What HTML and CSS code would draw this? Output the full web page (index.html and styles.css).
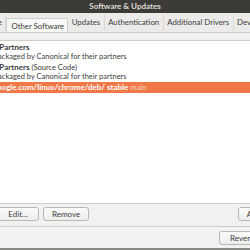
FILE: index.html
```html
<!DOCTYPE html>
<html lang="en">
<head>
  <meta charset="UTF-8" />
  <title>Software &amp; Updates</title>
  <link rel="stylesheet" href="styles.css">
</head>
<body>
  <div class="window">
    <header class="titlebar">Software &amp; Updates</header>
    <nav class="tabs">
      <span class="tab">Ubuntu Software</span>
      <span class="tab active">Other Software</span>
      <span class="tab">Updates</span>
      <span class="tab">Authentication</span>
      <span class="tab">Additional Drivers</span>
      <span class="tab">Developer Options</span>
    </nav>
    <section class="page">
      <ul class="sources">
        <li class="source">
          <b>Canonical Partners</b>
          <span>Software packaged by Canonical for their partners</span>
        </li>
        <li class="source">
          <span><b>Canonical Partners</b> (Source Code)</span>
          <span>Software packaged by Canonical for their partners</span>
        </li>
        <li class="source selected">
          <span><b>http://dl.google.com/linux/chrome/deb/ stable</b> <i>main</i></span>
        </li>
      </ul>
      <div class="actions">
        <div class="group">
          <button>Add...</button>
          <button>Edit...</button>
          <button>Remove</button>
        </div>
        <button class="volume">Add Volume...</button>
      </div>
    </section>
    <footer class="footer">
      <button>Revert</button>
      <button>Close</button>
    </footer>
  </div>
</body>
</html>
```

FILE: styles.css
```css
:root {
  --title-bg: #3c3b37;
  --title-text: #dfdbd2;
  --window-bg: #f2f1f0;
  --tab-bg: #ecebea;
  --border: #cfcdca;
  --text: #3c3c3c;
  --accent: #f07746;
}
* { box-sizing: border-box; margin: 0; padding: 0; }
body {
  width: 250px; height: 250px; overflow: hidden;
  font-family: 'Lato', sans-serif;
  font-size: 8px;
  color: var(--text);
  background: var(--window-bg);
}
.window { width: 250px; height: 250px; overflow: hidden; border-bottom: 2px solid #8a8885; }
.titlebar {
  height: 13px; line-height: 13px;
  background: var(--title-bg); color: var(--title-text);
  font-weight: 700; text-align: center;
}
.tabs {
  display: flex; align-items: flex-end;
  height: 20px; background: var(--tab-bg);
  border-bottom: 1px solid var(--border);
  margin-left: -60px; white-space: nowrap;
  font-size: 7.8px;
}
.tab {
  height: 16px; line-height: 14px;
  padding: 0 3.5px; margin-bottom: 1px;
  border-right: 1px solid #dcdad7;
}
.tab.active {
  background: #f7f7f6; height: 14px;
  border: 1px solid var(--border); border-bottom: none;
  margin-bottom: 0; padding: 0 3px 0 4px;
}
.page {
  padding: 7px 0 0;
  border-bottom: 1px solid var(--border);
}
.sources {
  list-style: none; height: 164px;
  background: #fff;
  border-top: 1px solid var(--border);
  border-bottom: 1px solid var(--border);
  padding-top: 1px;
  font-size: 7.5px;
}
.source {
  display: flex; flex-direction: column;
  padding: 1px 0; line-height: 9px;
  text-indent: -37.5px; white-space: nowrap;
}
.source b { font-size: 8px; }
.source.selected { background: var(--accent); color: #fff; }
.source.selected i { font-style: normal; color: #fbd6c6; }
.actions {
  display: flex; align-items: center;
  padding: 3px 0 5px; white-space: nowrap;
  margin-right: -54px;
}
.group { display: flex; gap: 4px; margin-left: -49px; }
.volume { margin-left: auto; }
button {
  font-family: inherit; font-size: 8px; color: var(--text);
  height: 14px; min-width: 42px; padding: 0 8px;
  border: 1px solid #bab8b4; border-radius: 3px;
  background: linear-gradient(#fbfbfb, #ededec);
}
.footer {
  display: flex; gap: 5px;
  padding: 4px 0 4px 219px; white-space: nowrap;
}
.footer button { height: 14px; padding: 0 10px; flex-shrink: 0; }
```
